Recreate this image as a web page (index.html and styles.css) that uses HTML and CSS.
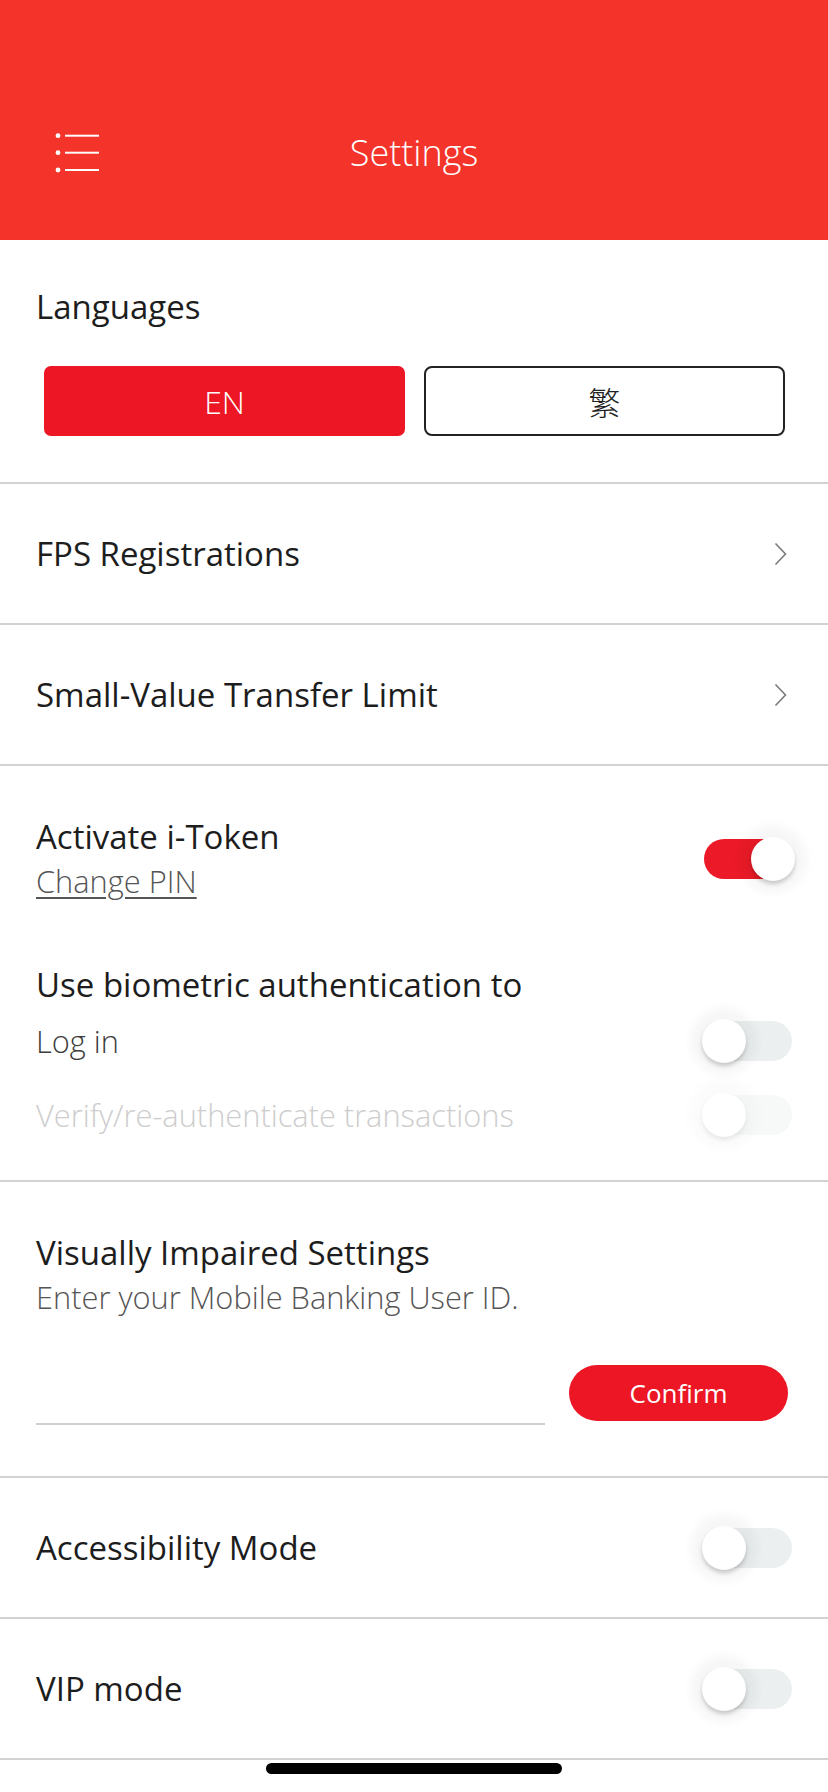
FILE: index.html
```html
<!DOCTYPE html>
<html lang="en">
<head>
<meta charset="utf-8">
<title>Settings</title>
<link rel="stylesheet" href="styles.css">
</head>
<body>
<div class="app">
  <header class="topbar">
    <div class="bar">
      <svg class="menu-btn" width="44" height="40" viewBox="0 0 44 40" aria-label="Menu">
        <circle cx="3" cy="2.7" r="2.4" fill="#fff"/>
        <circle cx="3" cy="19.7" r="2.4" fill="#fff"/>
        <circle cx="3" cy="37" r="2.4" fill="#fff"/>
        <rect x="10" y="1.7" width="34" height="2" fill="#fff"/>
        <rect x="10" y="18.7" width="34" height="2" fill="#fff"/>
        <rect x="10" y="36" width="34" height="2" fill="#fff"/>
      </svg>
      <h1 class="title">Settings</h1>
      <span></span>
    </div>
  </header>

  <main>
    <section class="sec lang-sec">
      <div class="label">Languages</div>
      <div class="lang-btns">
        <button class="lang-btn active">EN</button>
        <button class="lang-btn">繁</button>
      </div>
    </section>

    <a class="sec nav-row">
      <span class="label">FPS Registrations</span>
      <svg class="chev" width="13" height="24" viewBox="0 0 13 24"><path d="M1.5 1.5 L11.5 12 L1.5 22.5" fill="none" stroke="#7a7a7a" stroke-width="1.6"/></svg>
    </a>

    <a class="sec nav-row">
      <span class="label">Small-Value Transfer Limit</span>
      <svg class="chev" width="13" height="24" viewBox="0 0 13 24"><path d="M1.5 1.5 L11.5 12 L1.5 22.5" fill="none" stroke="#7a7a7a" stroke-width="1.6"/></svg>
    </a>

    <section class="sec token-sec">
      <div class="token-row">
        <div>
          <div class="label">Activate i-Token</div>
          <div class="sub link">Change PIN</div>
        </div>
        <span class="switch on"></span>
      </div>
      <div class="label bio-title">Use biometric authentication to</div>
      <div class="sub-row">
        <span class="sub dark">Log in</span>
        <span class="switch"></span>
      </div>
      <div class="sub-row">
        <span class="sub disabled">Verify/re-authenticate transactions</span>
        <span class="switch off-disabled"></span>
      </div>
    </section>

    <section class="sec vi-sec">
      <div class="label">Visually Impaired Settings</div>
      <div class="sub">Enter your Mobile Banking User ID.</div>
      <div class="id-row">
        <input class="id-input" type="text" aria-label="Mobile Banking User ID">
        <button class="confirm">Confirm</button>
      </div>
    </section>

    <section class="sec toggle-line">
      <span class="label">Accessibility Mode</span>
      <span class="switch"></span>
    </section>

    <section class="sec toggle-line">
      <span class="label">VIP mode</span>
      <span class="switch"></span>
    </section>
  </main>

  <div class="home-ind"></div>
</div>
</body>
</html>
```

FILE: styles.css
```css
html, body {
  margin: 0;
  padding: 0;
  background: #fff;
}

body {
  font-family: "Open Sans", "Noto Sans CJK TC", sans-serif;
  color: #1d1d1d;
}

.app {
  position: relative;
  width: 828px;
  height: 1792px;
  overflow: hidden;
  background: #fff;
}

/* Header */
.topbar {
  height: 240px;
  box-sizing: border-box;
  padding-top: 123px;
  background: #f4332a;
}

.bar {
  height: 60px;
  display: grid;
  grid-template-columns: 1fr auto 1fr;
  align-items: center;
}

.menu-btn {
  display: block;
  justify-self: start;
  margin-left: 55px;
}

.title {
  margin: 0;
  font-size: 36px;
  font-weight: 300;
  line-height: 60px;
  color: #fff;
}

/* Sections */
.sec {
  display: block;
  padding: 0 36px;
  border-bottom: 2px solid #d2d2d2;
  text-decoration: none;
  color: inherit;
}

.label {
  font-size: 33px;
  line-height: 45px;
  font-weight: 400;
  color: #1d1d1d;
}

.sub {
  font-size: 30.8px;
  line-height: 45px;
  font-weight: 300;
  color: #555;
}

.sub.dark {
  color: #3c3c3c;
}

.sub.disabled {
  color: #cdcdcd;
}

.sub.link {
  text-decoration: underline;
  text-decoration-thickness: 1.5px;
  text-underline-offset: 4px;
}

/* Languages */
.lang-sec {
  padding-top: 44px;
  padding-bottom: 46px;
}

.lang-btns {
  display: grid;
  grid-template-columns: 1fr 1fr;
  gap: 19px;
  margin: 37px 7px 0 8px;
}

.lang-btn {
  height: 70px;
  border: 2px solid #222;
  border-radius: 8px;
  background: #fff;
  font-family: "Open Sans", "Noto Sans CJK TC", sans-serif;
  font-size: 32px;
  font-weight: 300;
  color: #222;
  padding: 0;
}

.lang-btn.active {
  background: #ec1624;
  border-color: #ec1624;
  color: #fff;
  border-radius: 7px;
}

/* Nav rows */
.nav-row {
  height: 139px;
  display: flex;
  align-items: center;
  justify-content: space-between;
}

.chev {
  display: block;
  margin-right: 5px;
}

/* i-Token */
.token-sec {
  padding-top: 48px;
  padding-bottom: 28px;
}

.token-row {
  display: flex;
  align-items: center;
  justify-content: space-between;
}

.bio-title {
  margin-top: 58px;
  margin-bottom: -3px;
}

.sub-row {
  height: 74px;
  display: flex;
  align-items: center;
  justify-content: space-between;
}

/* Switch */
.switch {
  position: relative;
  flex: none;
  width: 88px;
  height: 40px;
  border-radius: 20px;
  background: #eceff0;
}

.switch::after {
  content: "";
  position: absolute;
  top: -2px;
  left: -2px;
  width: 44px;
  height: 44px;
  border-radius: 50%;
  background: #fff;
  box-shadow: 0 3px 4px rgba(0, 0, 0, 0.2), 0 0 10px 12px rgba(0, 0, 0, 0.035);
}

.switch.on {
  background: #ec1a28;
}

.switch.on::after {
  left: auto;
  right: -3px;
}

.switch.off-disabled {
  opacity: 0.4;
}

/* Visually impaired */
.vi-sec {
  padding-top: 48px;
  padding-bottom: 51px;
}

.id-row {
  display: flex;
  align-items: flex-end;
  gap: 24px;
  margin-top: 45px;
  margin-right: 4px;
}

.id-input {
  flex: 1;
  min-width: 0;
  height: 58px;
  box-sizing: border-box;
  border: none;
  border-bottom: 2px solid #cfcfcf;
  background: transparent;
  outline: none;
  font-family: "Open Sans", sans-serif;
  font-size: 30px;
}

.confirm {
  width: 219px;
  height: 56px;
  margin-bottom: 4px;
  border: none;
  border-radius: 28px;
  background: #ec1624;
  color: #fff;
  font-family: "Open Sans", sans-serif;
  font-size: 26px;
  font-weight: 400;
  padding: 0;
}

/* Toggle lines */
.toggle-line {
  height: 139px;
  display: flex;
  align-items: center;
  justify-content: space-between;
}

/* Home indicator */
.home-ind {
  position: absolute;
  left: 266px;
  bottom: 18px;
  width: 296px;
  height: 11px;
  border-radius: 6px;
  background: #000;
}
```
